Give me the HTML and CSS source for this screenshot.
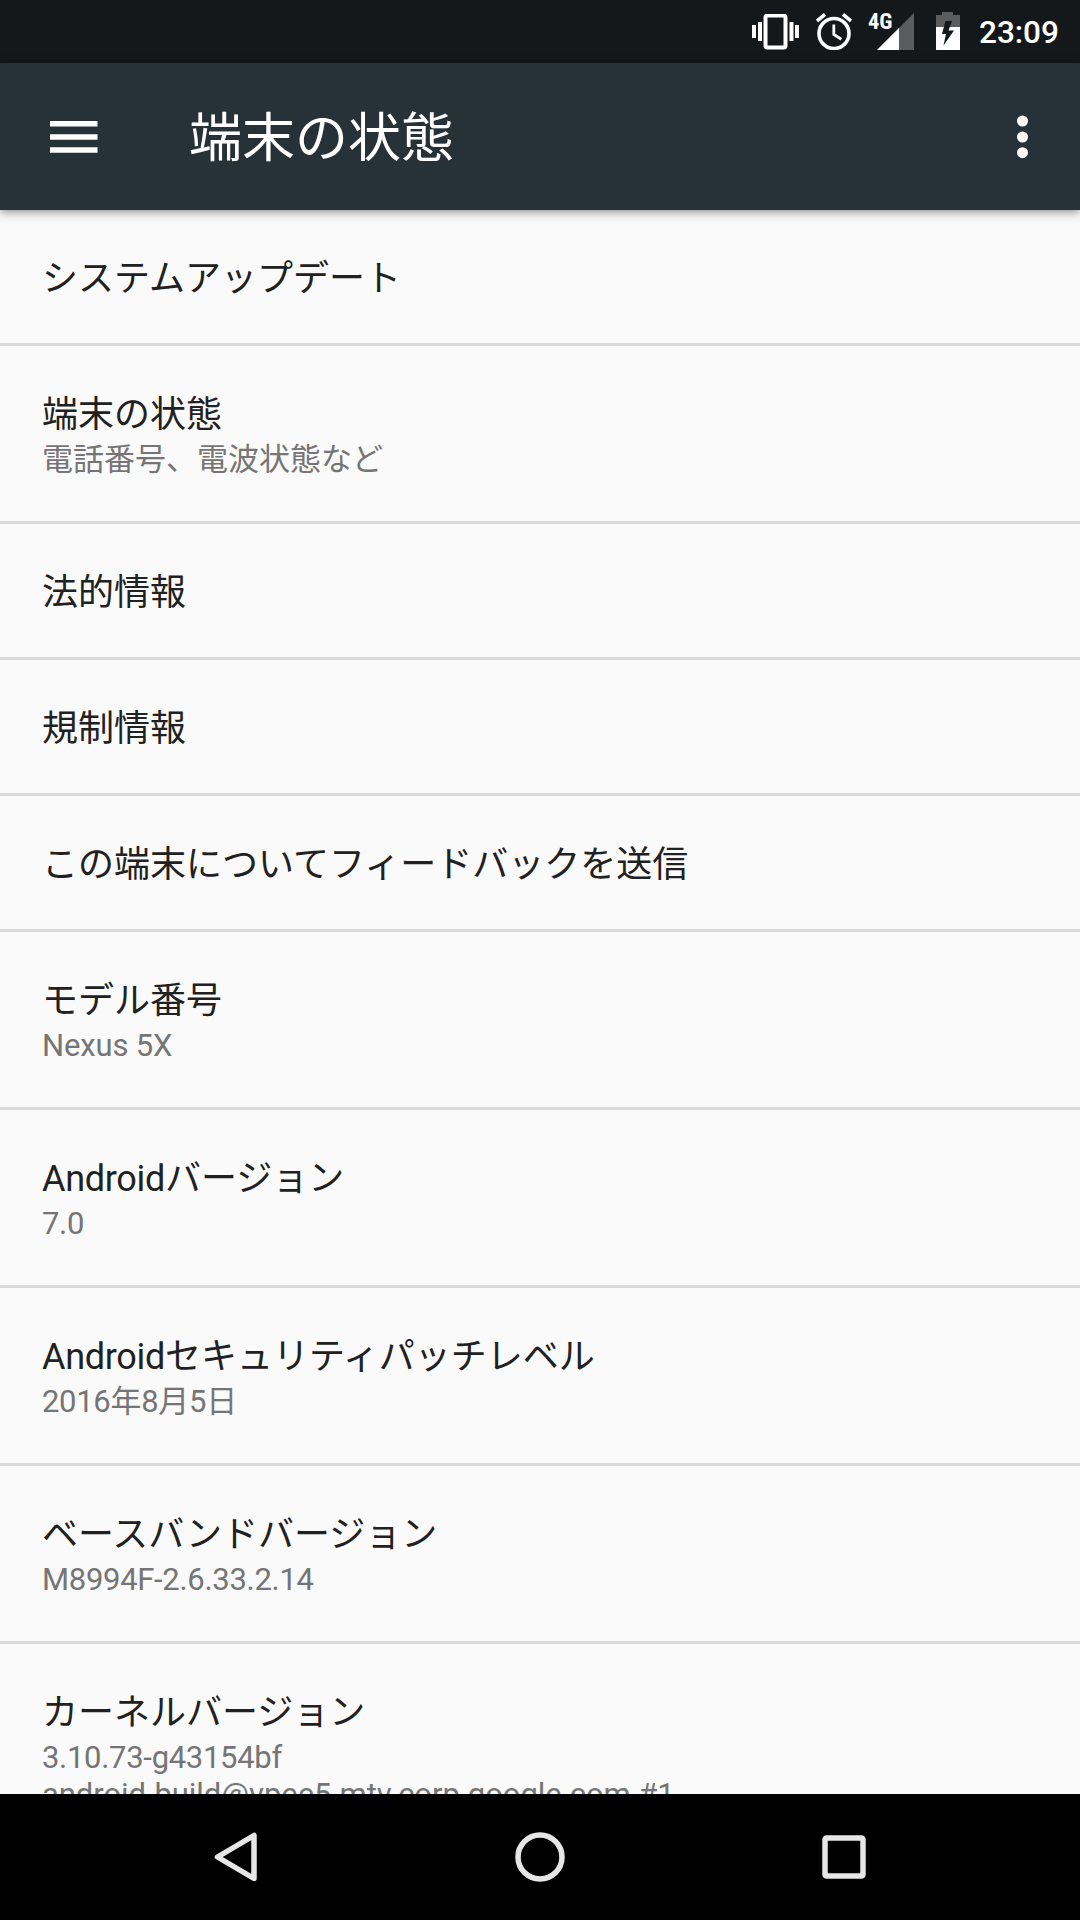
FILE: index.html
```html
<!DOCTYPE html>
<html lang="ja">
<head>
    <meta charset="UTF-8">
    <meta name="viewport" content="width=device-width, initial-scale=1.0">
    <title>端末の状態</title>
    <link rel="stylesheet" href="styles.css">
</head>
<body>
    <div class="screen">
        <div class="status-bar">
            <svg class="icon-vibrate" width="48" height="36" viewBox="0 0 48 36">
                <path d="M0 11h4v13H0zM6 8h4v19H6zM37.500 8h4v19h-4zM43 11h4v13h-4z" fill="#fff"/>
                <rect x="13.500" y="1.500" width="20" height="32" rx="2" fill="none" stroke="#fff" stroke-width="4"/>
            </svg>
            <svg class="icon-alarm" width="36" height="38" viewBox="0 0 36 38">
                <circle cx="18" cy="21.500" r="15" fill="none" stroke="#fff" stroke-width="3.600"/>
                <path d="M1 9L9 2.300M35 9L27 2.300" stroke="#fff" stroke-width="3.600"/>
                <path d="M17.800 12.500v10l7.500 4.700" fill="none" stroke="#fff" stroke-width="2.800"/>
            </svg>
            <div class="signal">
                <span class="signal-type">4G</span>
                <svg width="37" height="37" viewBox="0 0 37 37">
                    <path d="M37 0v37H0z" fill="#5b5c5e"/>
                    <path d="M22 15v22H0z" fill="#fff"/>
                </svg>
            </div>
            <svg class="icon-battery" width="24" height="38" viewBox="0 0 24 38">
                <path d="M0 3h6V0h11v3h7v12H0z" fill="#5b5c5e"/>
                <path d="M0 15h24v23H0z" fill="#fff"/>
                <path d="M9.500 9H16l-3.500 9.500H18L7.500 33.500l2.500-11.500H6z" fill="#14181b"/>
            </svg>
            <span class="clock">23:09</span>
        </div>

        <div class="app-bar">
            <svg class="icon-menu" width="48" height="32" viewBox="0 0 48 32">
                <path d="M0 0h47.500v5.500H0zM0 13.200h47.500v5.500H0zM0 26.300h47.500v5.500H0z" fill="#fff"/>
            </svg>
            <h1>端末の状態</h1>
            <svg class="icon-more" width="12" height="44" viewBox="0 0 12 44">
                <circle cx="6.500" cy="6" r="5.500" fill="#fff"/>
                <circle cx="6.500" cy="22" r="5.500" fill="#fff"/>
                <circle cx="6.500" cy="37.700" r="5.500" fill="#fff"/>
            </svg>
        </div>

        <ul class="settings">
            <li><h2>システムアップデート</h2></li>
            <li><h2>端末の状態</h2><p>電話番号、電波状態など</p></li>
            <li><h2>法的情報</h2></li>
            <li><h2>規制情報</h2></li>
            <li><h2>この端末についてフィードバックを送信</h2></li>
            <li><h2>モデル番号</h2><p class="model">Nexus 5X</p></li>
            <li><h2><span class="latin">Android</span>バージョン</h2><p class="latin">7.0</p></li>
            <li><h2><span class="latin">Android</span>セキュリティパッチレベル</h2><p class="latin">2016年8月5日</p></li>
            <li><h2>ベースバンドバージョン</h2><p class="latin">M8994F-2.6.33.2.14</p></li>
            <li><h2>カーネルバージョン</h2><p><span class="latin">3.10.73-g43154bf</span><br><span class="build">android-build@vpee5.mtv.corp.google.com #1</span></p></li>
        </ul>

        <div class="nav-bar">
            <svg width="50" height="50" viewBox="0 0 50 50">
                <path d="M43 3.500v43L6.500 25z"/>
            </svg>
            <svg width="50" height="50" viewBox="0 0 50 50">
                <circle cx="25" cy="25" r="22"/>
            </svg>
            <svg width="50" height="50" viewBox="0 0 50 50">
                <rect x="6" y="6" width="38" height="38" rx="1.500"/>
            </svg>
        </div>
    </div>
</body>
</html>
```
FILE: styles.css
```css
* {
    margin: 0;
    padding: 0;
    box-sizing: border-box;
}

body {
    font-family: Roboto, 'Noto Sans CJK JP', sans-serif;
    background: #fafafa;
    color: #212121;
}

svg {
    display: block;
    flex-shrink: 0;
}

.screen {
    width: 1080px;
    height: 1920px;
    display: flex;
    flex-direction: column;
    overflow: hidden;
}

.status-bar {
    height: 63px;
    flex-shrink: 0;
    display: flex;
    justify-content: flex-end;
    align-items: flex-start;
    padding: 12px 22px 0 0;
    background: #14181b;
    color: #fff;
}

.icon-vibrate {
    margin: 2px 16px 0 0;
}

.icon-alarm {
    margin-right: 25px;
}

.signal {
    position: relative;
    margin: 1px 22px 0 0;
}

.signal-type {
    position: absolute;
    left: -9px;
    top: 1px;
    font-family: 'Roboto Condensed', Roboto, sans-serif;
    font-size: 22px;
    font-weight: 700;
    line-height: 16px;
    transform: scaleX(1.02);
    transform-origin: left;
}

.icon-battery {
    margin-right: 19px;
}

.clock {
    width: 79px;
    font-size: 31.5px;
    font-weight: 500;
    line-height: 42px;
}

.app-bar {
    position: relative;
    height: 147px;
    flex-shrink: 0;
    display: flex;
    align-items: center;
    padding: 0 52px 0 50px;
    background: #263238;
    color: #fff;
    box-shadow: 0 2px 9px rgba(0, 0, 0, 0.45);
}

.app-bar h1 {
    flex: 1;
    margin-left: 91px;
    padding-top: 4px;
    font-size: 53px;
    font-weight: 400;
    line-height: 80px;
}

.settings {
    flex: 1;
    min-height: 0;
    overflow: hidden;
    list-style: none;
}

.settings li {
    padding: 42px 42px 36px;
    border-bottom: 3px solid #dadada;
}

.settings h2 {
    font-size: 36px;
    font-weight: 400;
    line-height: 55px;
}

.settings p {
    margin: -2px 0 7px;
    font-size: 31px;
    line-height: 37px;
    color: #757575;
}

.settings .latin {
    letter-spacing: -0.3px;
}

.settings .model {
    letter-spacing: -0.15px;
}

.settings .build {
    letter-spacing: -0.06px;
}

.nav-bar {
    height: 126px;
    flex-shrink: 0;
    display: flex;
    justify-content: center;
    align-items: center;
    gap: 254px;
    background: #000;
}

.nav-bar svg {
    fill: none;
    stroke: #e6e6e6;
    stroke-width: 5.5;
    stroke-linejoin: round;
}
```
